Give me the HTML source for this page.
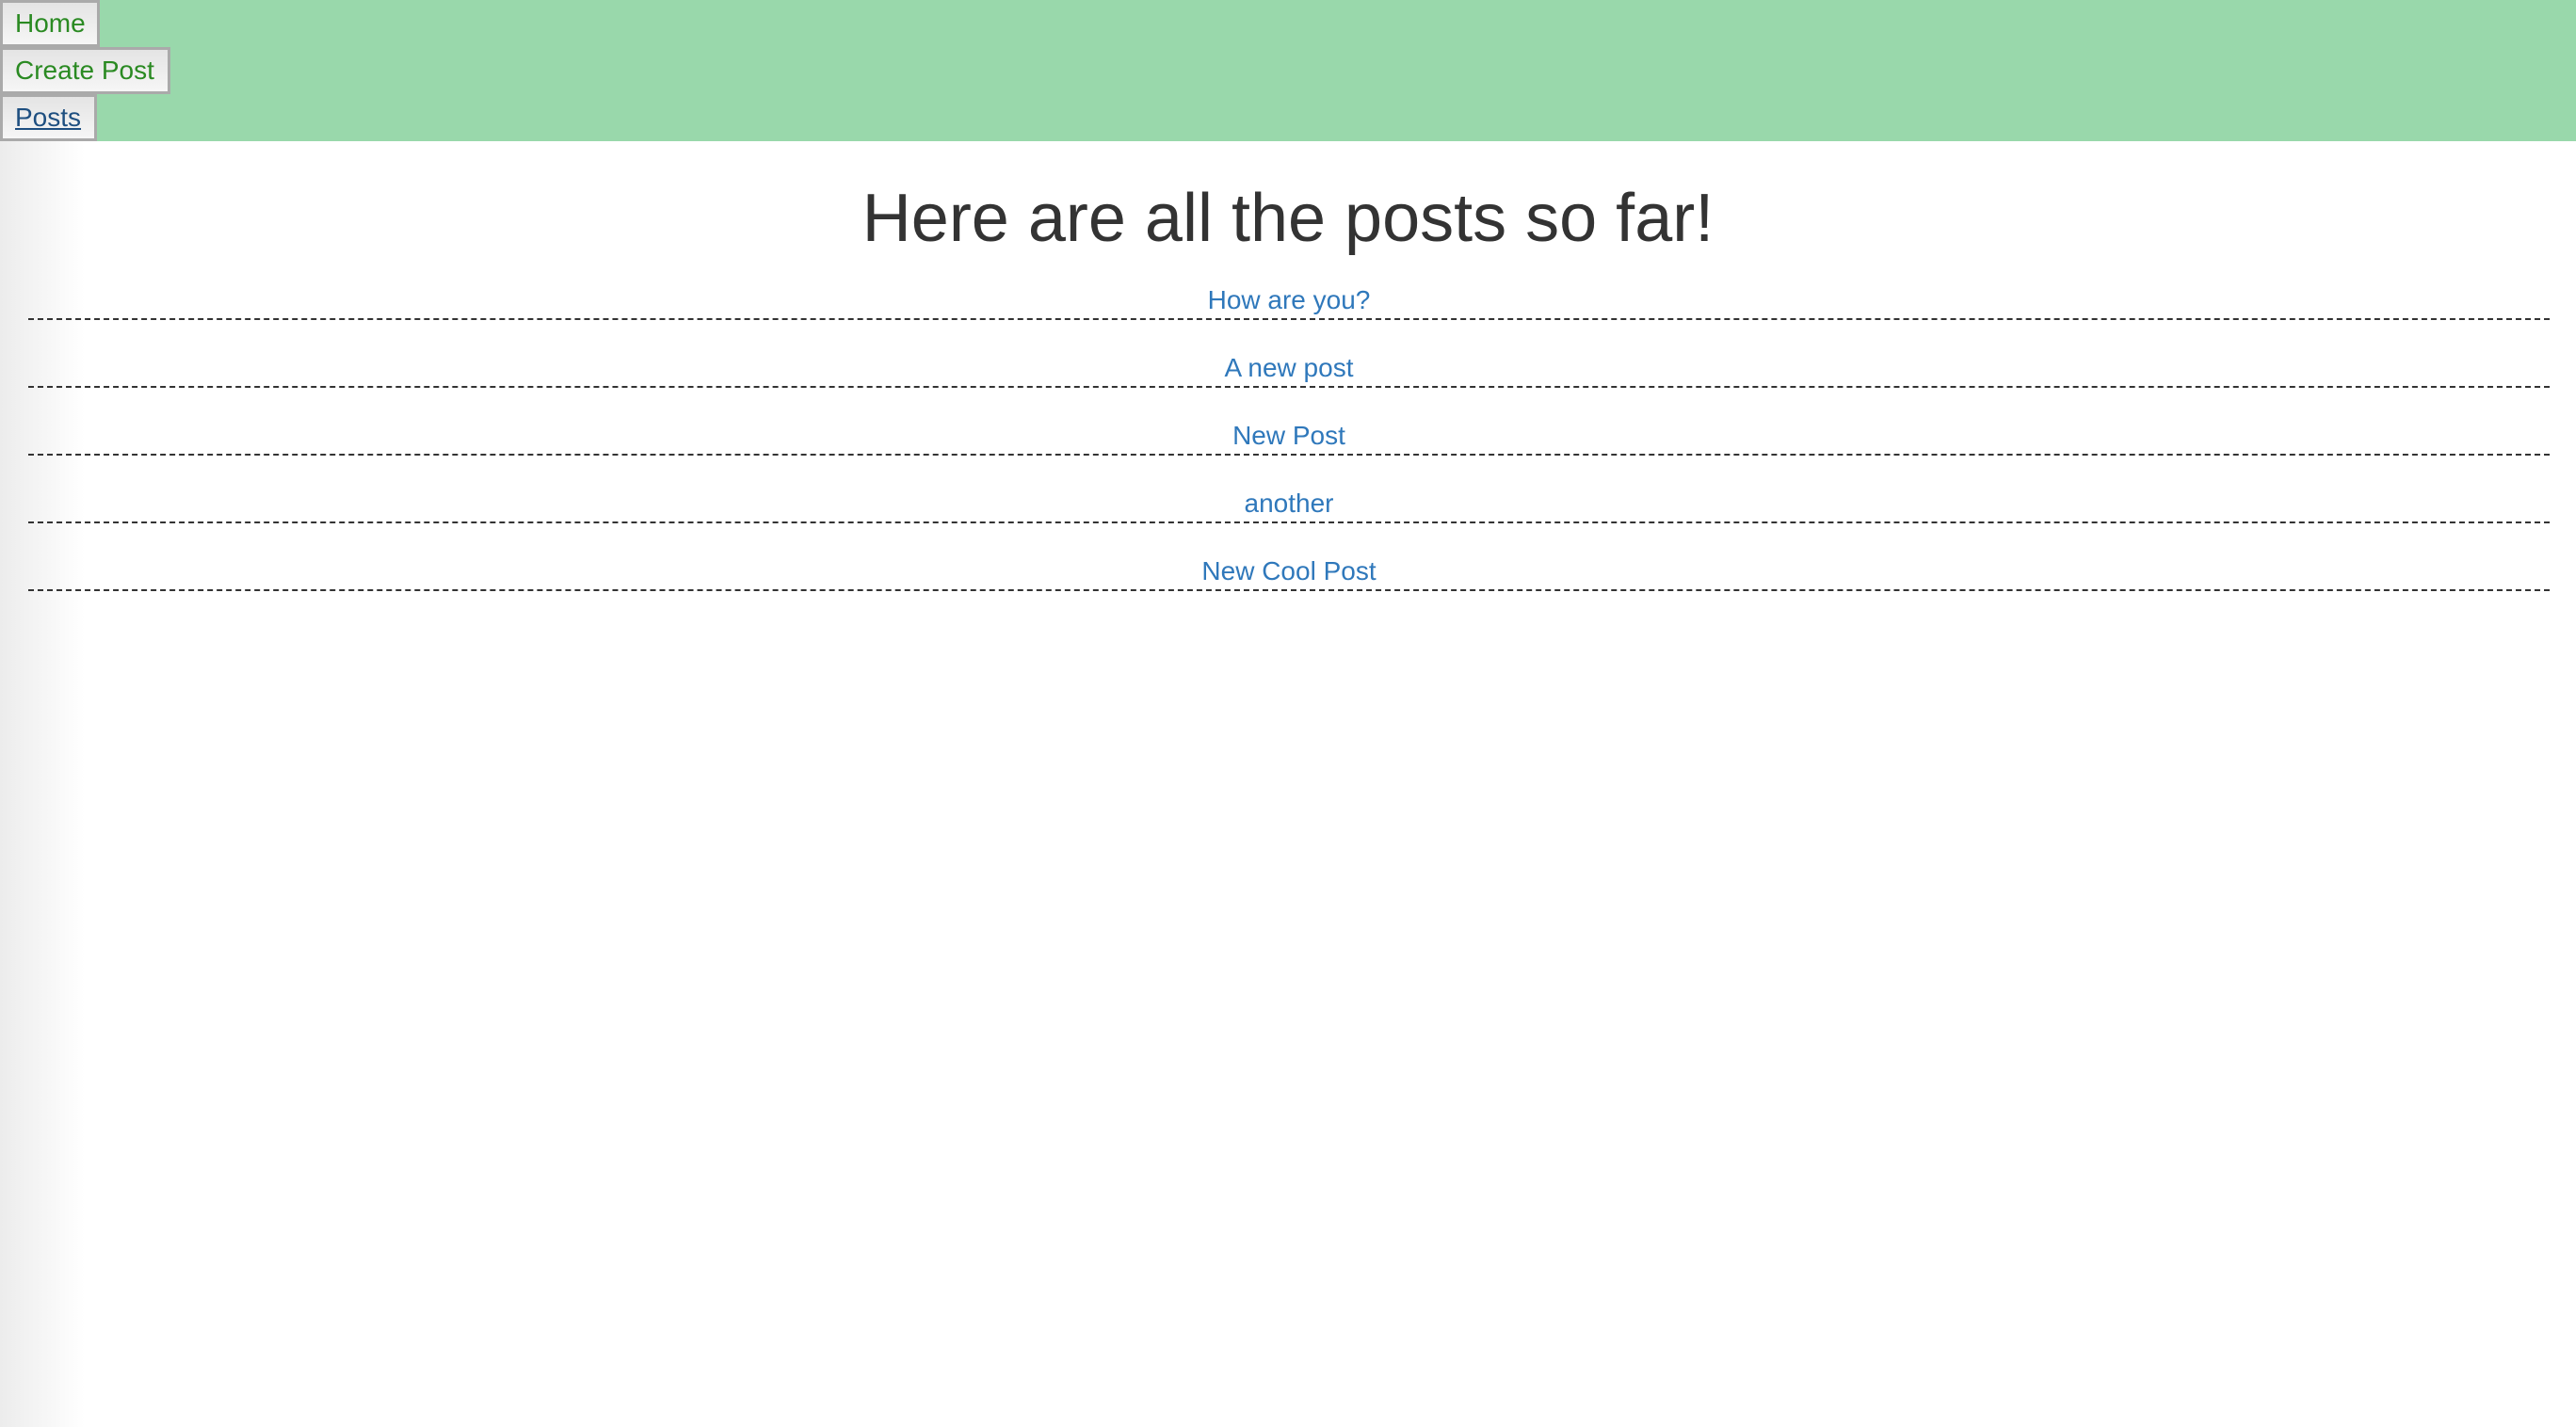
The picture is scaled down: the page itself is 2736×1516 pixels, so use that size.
<!DOCTYPE html>
<html><head><meta charset="utf-8"><style>
html,body{margin:0;padding:0;width:2736px;height:1516px;overflow:hidden;background:#fff;font-family:"Liberation Sans",Arial,sans-serif;}
.side{position:absolute;left:0;top:150px;width:90px;height:1366px;background:linear-gradient(to right,#ececec,#fff);}
header{position:absolute;left:0;top:0;width:2736px;height:150px;background:#99d8ab;}
.b{position:absolute;left:0;height:44px;border:3px solid #aaa;background:linear-gradient(#e4e4e4,#f6f6f6);font-size:28px;line-height:44px;color:#2a8a22;padding-left:13px;box-sizing:content-box;}
h1{position:absolute;top:187px;left:0;width:2736px;text-align:center;margin:0;font-weight:normal;font-size:72px;line-height:90px;color:#333;}
.p{position:absolute;left:30px;width:2678px;height:72px;border-bottom:2px dashed #333;text-align:center;}
.p span{position:absolute;left:0;right:0;bottom:3px;font-size:28px;color:#2f78bb;}
</style></head><body>
<header>
<div class="b" style="top:0;width:87px">Home</div>
<div class="b" style="top:50px;width:162px">Create Post</div>
<div class="b" style="top:100px;width:84px;color:#1e4f80;text-decoration:underline">Posts</div>
</header>
<div class="side"></div>
<h1>Here are all the posts so far!</h1>
<div class="p" style="top:266px"><span>How are you?</span></div>
<div class="p" style="top:338px"><span>A new post</span></div>
<div class="p" style="top:410px"><span>New Post</span></div>
<div class="p" style="top:482px"><span>another</span></div>
<div class="p" style="top:554px"><span>New Cool Post</span></div>
</body></html>
